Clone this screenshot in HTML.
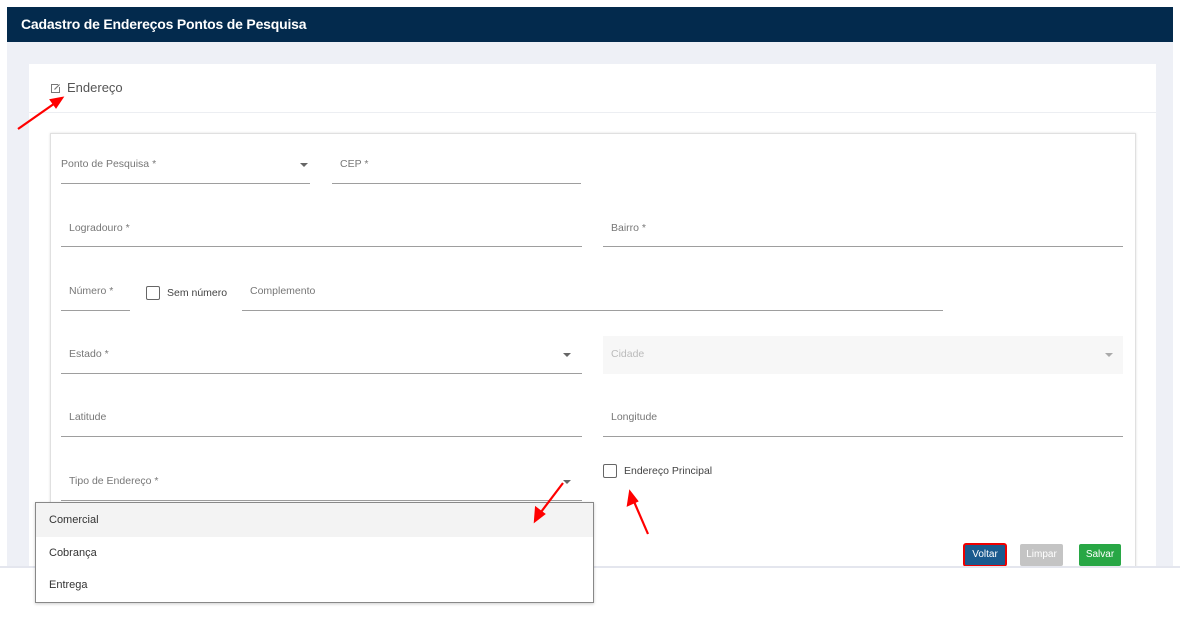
<!DOCTYPE html>
<html><head><meta charset="utf-8"><style>
*{margin:0;padding:0;box-sizing:border-box}
body{width:1180px;height:619px;position:relative;background:#fff;font-family:"Liberation Sans",sans-serif;overflow:hidden}
.a{position:absolute}
.lbl{position:absolute;font-size:10.5px;color:#777}
.ul{position:absolute;height:1px;background:#9e9e9e}
.car{position:absolute;width:0;height:0;border-left:4px solid transparent;border-right:4px solid transparent;border-top:4px solid #666}
.cb{position:absolute;width:14px;height:14px;border:1.5px solid #666;border-radius:2px;background:#fff}
.btn{position:absolute;height:22px;top:544px;font-size:10px;color:#fff;text-align:center;line-height:22px;border-radius:2px}
</style></head><body>
<div class="a" style="left:7px;top:42px;width:1166px;height:524px;background:#eef0f6"></div>
<div class="a" style="left:7px;top:7px;width:1166px;height:35px;background:#032a4d;color:#fff;font-size:14px;font-weight:bold;line-height:35px;padding-left:14px;letter-spacing:-0.2px">Cadastro de Endereços Pontos de Pesquisa</div>
<div class="a" style="left:29px;top:64px;width:1127px;height:502px;background:#fff"></div>
<div class="a" style="left:29px;top:112px;width:1127px;height:1px;background:#eceef2"></div>
<svg class="a" style="left:50px;top:83px" width="11" height="11" viewBox="0 0 11 11"><path d="M8 1.5H1.5v8h8V4" fill="none" stroke="#777" stroke-width="1"/><path d="M4.5 6.5l5-5" stroke="#777" stroke-width="1.2"/></svg>
<div class="a" style="left:67px;top:80px;font-size:13px;color:#555">Endereço</div>
<div class="a" style="left:50px;top:133px;width:1086px;height:440px;border:1px solid #e0e0e0;box-shadow:0 0 2px #ddd;background:#fff"></div>
<div class="lbl" style="left:61px;top:158px">Ponto de Pesquisa *</div><div class="car" style="left:300px;top:163px"></div><div class="ul" style="left:61px;top:183px;width:249px"></div>
<div class="lbl" style="left:340px;top:158px">CEP *</div><div class="ul" style="left:332px;top:183px;width:249px"></div>
<div class="lbl" style="left:69px;top:222px">Logradouro *</div><div class="ul" style="left:61px;top:246px;width:521px"></div>
<div class="lbl" style="left:611px;top:222px">Bairro *</div><div class="ul" style="left:603px;top:246px;width:520px"></div>
<div class="lbl" style="left:69px;top:285px">Número *</div><div class="ul" style="left:61px;top:310px;width:69px"></div>
<div class="cb" style="left:146px;top:286px"></div><div class="a" style="left:167px;top:287px;font-size:10.5px;color:#444">Sem número</div>
<div class="lbl" style="left:250px;top:285px">Complemento</div><div class="ul" style="left:242px;top:310px;width:701px"></div>
<div class="lbl" style="left:69px;top:348px">Estado *</div><div class="car" style="left:563px;top:353px"></div><div class="ul" style="left:61px;top:373px;width:521px"></div>
<div class="a" style="left:603px;top:336px;width:520px;height:38px;background:#f7f7f7"></div>
<div class="lbl" style="left:611px;top:348px;color:#bbb">Cidade</div><div class="car" style="left:1105px;top:353px;border-top-color:#aaa"></div>
<div class="lbl" style="left:69px;top:411px">Latitude</div><div class="ul" style="left:61px;top:436px;width:521px"></div>
<div class="lbl" style="left:611px;top:411px">Longitude</div><div class="ul" style="left:603px;top:436px;width:520px"></div>
<div class="lbl" style="left:69px;top:475px">Tipo de Endereço *</div><div class="car" style="left:563px;top:480px"></div><div class="ul" style="left:61px;top:500px;width:521px"></div>
<div class="cb" style="left:603px;top:464px"></div><div class="a" style="left:624px;top:465px;font-size:10.5px;color:#444">Endereço Principal</div>
<div class="btn" style="left:964px;width:42px;background:#1a5a8e;outline:2px solid #e00;outline-offset:-1px">Voltar</div>
<div class="btn" style="left:1020px;width:43px;background:#c4c4c4">Limpar</div>
<div class="btn" style="left:1079px;width:42px;background:#28a745">Salvar</div>
<div class="a" style="left:0;top:566px;width:1180px;height:53px;background:#fff;border-top:2px solid #e4e6ee"></div>
<div class="a" style="left:35px;top:502px;width:559px;height:101px;background:#fff;border:1px solid #888;box-shadow:0 1px 3px rgba(0,0,0,.2)">
<div style="height:34px;background:#f3f3f3;font-size:11px;color:#333;line-height:34px;padding-left:13px">Comercial</div>
<div style="height:32px;font-size:11px;color:#333;line-height:32px;padding-left:13px">Cobrança</div>
<div style="height:32px;font-size:11px;color:#333;line-height:32px;padding-left:13px">Entrega</div>
</div>
<svg class="a" style="left:0;top:0" width="1180" height="619"><g stroke="#f00" stroke-width="2.2" fill="#f00">
<line x1="18" y1="129" x2="58" y2="101"/><polygon points="62,98 51,100 56,107"/>
<line x1="563" y1="483" x2="538" y2="516"/><polygon points="535,521 536,508 544,514"/>
<line x1="648" y1="534" x2="632" y2="497"/><polygon points="630,492 628,505 637,501"/>
</g></svg>
</body></html>
